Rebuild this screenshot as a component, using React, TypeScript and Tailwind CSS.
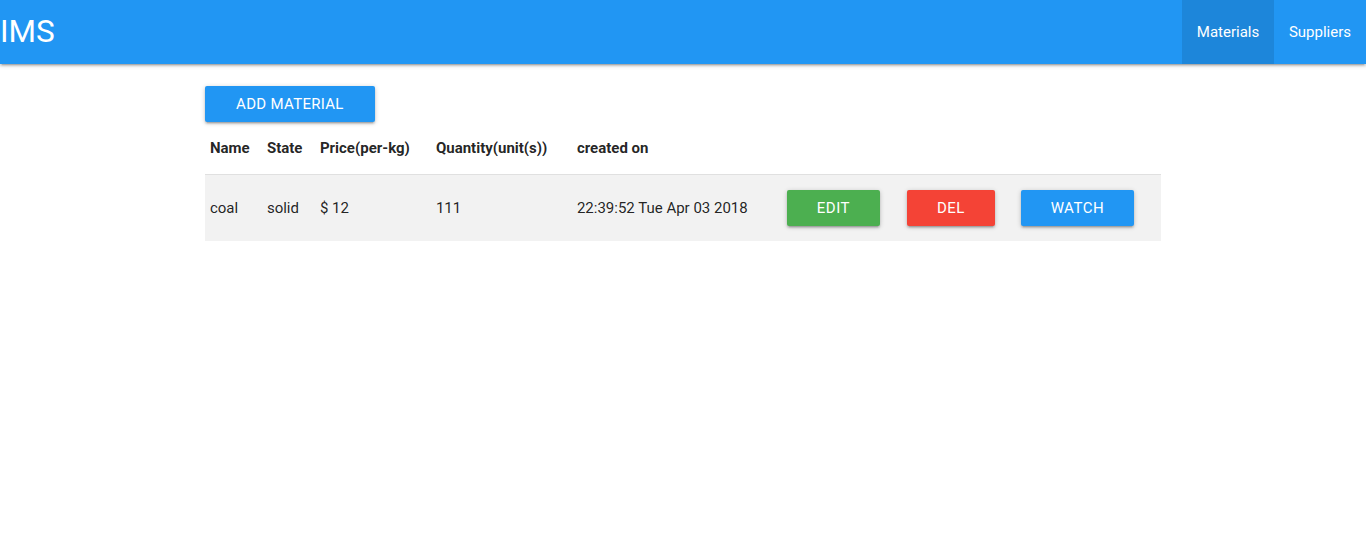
import React from "react";

const btnShadow =
  "shadow-[0_2px_2px_0_rgba(0,0,0,0.14),0_3px_1px_-2px_rgba(0,0,0,0.12),0_1px_5px_0_rgba(0,0,0,0.2)]";

export default function App() {
  return (
    <div className="min-h-[551px] bg-white font-['Roboto',sans-serif] text-[15px] text-[rgba(0,0,0,0.87)]">
      <nav className="h-16 bg-[#2196F3] flex items-center justify-between shadow-[0_2px_2px_0_rgba(0,0,0,0.14),0_3px_1px_-2px_rgba(0,0,0,0.12),0_1px_5px_0_rgba(0,0,0,0.2)]">
        <span className="text-white text-[31.5px] leading-[64px]">IMS</span>
        <ul className="flex h-full">
          <li className="h-full w-[92px] flex items-center justify-center bg-[rgba(0,0,0,0.1)] text-white text-[15px]">
            Materials
          </li>
          <li className="h-full w-[92px] flex items-center justify-center text-white text-[15px]">
            Suppliers
          </li>
        </ul>
      </nav>
      <div className="w-[70%] mx-auto">
        <div className="pt-[22px]">
          <button
            className={`h-9 w-[170px] rounded-[2px] bg-[#2196F3] text-white text-[15px] tracking-[0.3px] uppercase ${btnShadow}`}
          >
            Add Material
          </button>
        </div>
        <table className="w-full border-collapse">
          <thead>
            <tr className="border-b border-[rgba(0,0,0,0.12)]">
              <th className="w-[57px] px-[5px] py-[15px] text-left font-bold leading-[22px]">Name</th>
              <th className="w-[53px] px-[5px] py-[15px] text-left font-bold leading-[22px]">State</th>
              <th className="w-[116px] px-[5px] py-[15px] text-left font-bold leading-[22px]">Price(per-kg)</th>
              <th className="w-[141px] px-[5px] py-[15px] text-left font-bold leading-[22px]">Quantity(unit(s))</th>
              <th className="w-[210px] px-[5px] py-[15px] text-left font-bold leading-[22px]">created on</th>
              <th className="w-[120px]"></th>
              <th className="w-[114px]"></th>
              <th></th>
            </tr>
          </thead>
          <tbody>
            <tr className="bg-[#f2f2f2]">
              <td className="px-[5px] py-[15px] leading-[22px]">coal</td>
              <td className="px-[5px] py-[15px] leading-[22px]">solid</td>
              <td className="px-[5px] py-[15px] leading-[22px]">$ 12</td>
              <td className="px-[5px] py-[15px] leading-[22px]">111</td>
              <td className="px-[5px] py-[15px] leading-[22px]">22:39:52 Tue Apr 03 2018</td>
              <td className="px-[5px] py-[15px]">
                <button className={`h-9 w-[93px] rounded-[2px] bg-[#4CAF50] text-white text-[15px] tracking-[0.5px] ${btnShadow}`}>
                  EDIT
                </button>
              </td>
              <td className="px-[5px] py-[15px]">
                <button className={`h-9 w-[88px] rounded-[2px] bg-[#F44336] text-white text-[15px] tracking-[0.5px] ${btnShadow}`}>
                  DEL
                </button>
              </td>
              <td className="px-[5px] py-[15px]">
                <button className={`h-9 w-[113px] rounded-[2px] bg-[#2196F3] text-white text-[15px] tracking-[0.5px] ${btnShadow}`}>
                  WATCH
                </button>
              </td>
            </tr>
          </tbody>
        </table>
      </div>
    </div>
  );
}
